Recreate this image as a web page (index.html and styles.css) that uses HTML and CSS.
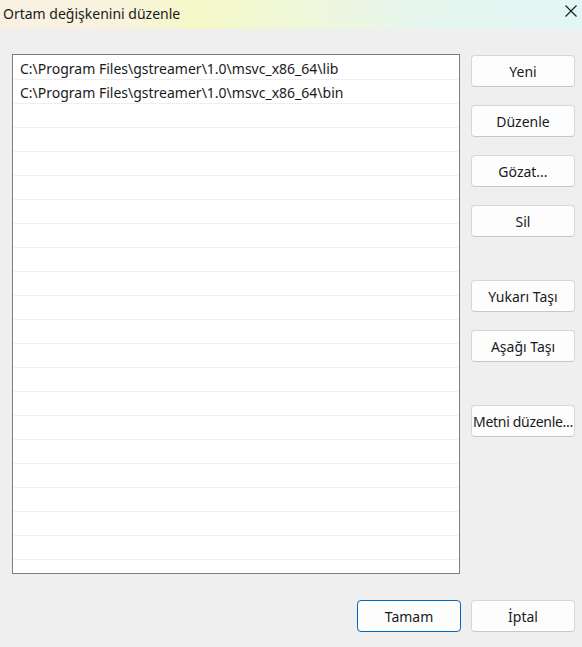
FILE: index.html
```html
<!DOCTYPE html>
<html lang="tr">
<head>
<meta charset="utf-8">
<title>Ortam değişkenini düzenle</title>
<link rel="stylesheet" href="styles.css">
</head>
<body>
<div class="window">
  <header class="titlebar">
    <span class="title">Ortam değişkenini düzenle</span>
    <span class="close" aria-label="Kapat">
      <svg width="12" height="12" viewBox="0 0 12 12"><path d="M0.5 0.5 L11.5 11.5 M11.5 0.5 L0.5 11.5" stroke="#1a1a1a" stroke-width="1.1" fill="none"/></svg>
    </span>
  </header>
  <div class="content">
    <div class="main">
      <div class="list">
        <div class="row">C:\Program Files\gstreamer\1.0\msvc_x86_64\lib</div>
        <div class="row">C:\Program Files\gstreamer\1.0\msvc_x86_64\bin</div>
        <div class="row"></div><div class="row"></div><div class="row"></div>
        <div class="row"></div><div class="row"></div><div class="row"></div>
        <div class="row"></div><div class="row"></div><div class="row"></div>
        <div class="row"></div><div class="row"></div><div class="row"></div>
        <div class="row"></div><div class="row"></div><div class="row"></div>
        <div class="row"></div><div class="row"></div><div class="row"></div>
        <div class="row"></div>
      </div>
      <div class="side">
        <button class="btn">Yeni</button>
        <button class="btn">Düzenle</button>
        <button class="btn">Gözat...</button>
        <button class="btn">Sil</button>
        <button class="btn group">Yukarı Taşı</button>
        <button class="btn">Aşağı Taşı</button>
        <button class="btn group tight">Metni düzenle...</button>
      </div>
    </div>
    <div class="footer">
      <button class="btn primary">Tamam</button>
      <button class="btn">İptal</button>
    </div>
  </div>
</div>
</body>
</html>
```

FILE: styles.css
```css
html, body {
  margin: 0;
  padding: 0;
}
body {
  width: 582px;
  height: 647px;
  background: #efefef;
  font-family: "Noto Sans", "Open Sans", sans-serif;
  color: #1a1a1a;
  overflow: hidden;
}
.titlebar {
  height: 29px;
  display: flex;
  align-items: center;
  justify-content: space-between;
  background: linear-gradient(90deg, #f9f0e4 0%, #f8f3dd 20%, #f5f8c8 34%, #eef7dc 55%, #e6f6ee 72%, #e2f6f5 100%);
}
.title {
  padding-left: 3px;
  font-size: 14px;
  line-height: 20px;
  margin-top: -2px;
}
.close {
  display: flex;
  width: 12px;
  height: 12px;
  margin-right: 5px;
  margin-top: -8px;
}
.content {
  padding: 25px 0 0 12px;
}
.main {
  display: flex;
  gap: 11px;
}
.list {
  box-sizing: border-box;
  width: 448px;
  height: 520px;
  border: 1px solid #7c7c84;
  background: #ffffff;
  padding-top: 1px;
  overflow: hidden;
}
.row {
  box-sizing: border-box;
  height: 24px;
  margin: 0 1px;
  border-bottom: 1px solid #eeeeee;
  padding: 2px 0 0 6px;
  font-size: 14px;
  line-height: 21px;
  white-space: nowrap;
}
.side {
  display: flex;
  flex-direction: column;
  gap: 18px;
  padding-top: 1px;
}
.btn {
  box-sizing: border-box;
  width: 104px;
  height: 32px;
  padding: 0;
  border: 1px solid #d6d6d6;
  border-bottom-color: #c8c8c8;
  border-radius: 4px;
  background: #fdfdfd;
  font-family: inherit;
  font-size: 14px;
  color: #1a1a1a;
  white-space: nowrap;
  overflow: hidden;
}
.btn.group {
  margin-top: 25px;
}
.btn.tight {
  letter-spacing: -0.3px;
}
.footer {
  display: flex;
  gap: 10px;
  padding-left: 345px;
  margin-top: 26px;
}
.btn.primary {
  border-color: #0067c0;
}
```
